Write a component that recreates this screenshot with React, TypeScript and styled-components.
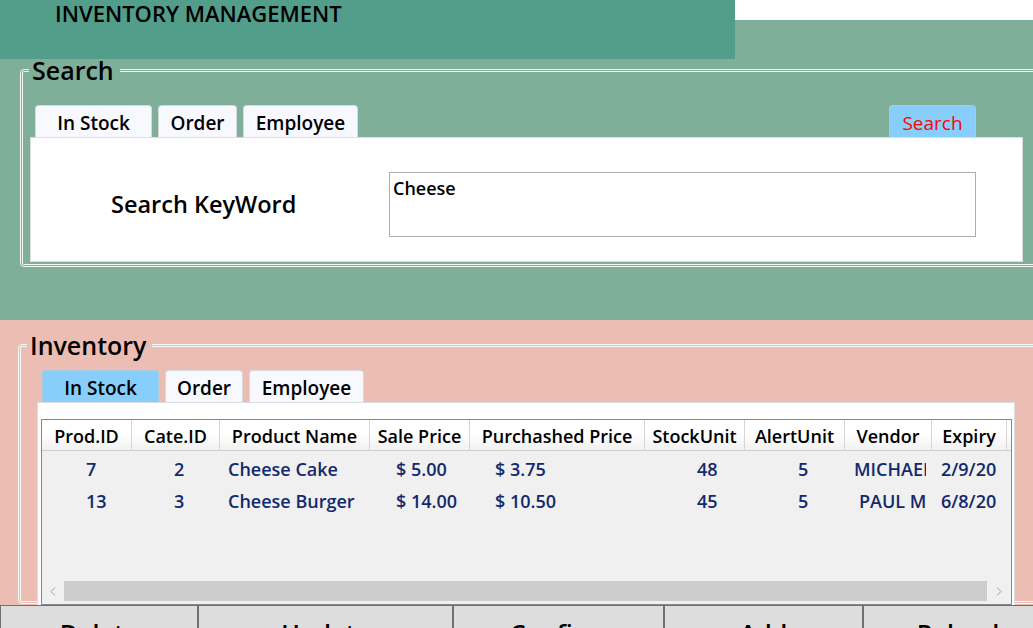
import React from "react";
import styled, { createGlobalStyle } from "styled-components";

const GlobalStyle = createGlobalStyle`
  html, body { margin: 0; padding: 0; background: #ffffff; overflow: hidden; }
  body { font-family: "Open Sans", "Noto Sans", "DejaVu Sans", sans-serif; color: #000; }
  * { box-sizing: border-box; }
`;

const Window = styled.div`
  width: 1033px;
  height: 628px;
  overflow: hidden;
  display: flex;
  flex-direction: column;
  background: #ffffff;
`;

const TopBar = styled.header`
  flex: none;
  display: grid;
  grid-template-columns: 735px 1fr;
  grid-template-rows: 20px 39px;
`;

const Title = styled.h1`
  grid-row: 1 / 3;
  grid-column: 1;
  margin: 0;
  padding: 1px 0 0 55px;
  background: #529e8a;
  font-size: 22px;
  font-weight: 600;
  line-height: 25px;
  color: #000;
`;

const TopBlank = styled.div`
  grid-row: 1;
  grid-column: 2;
  background: #ffffff;
`;

const TopFill = styled.div`
  grid-row: 2;
  grid-column: 2;
  background: #80af99;
`;

const Section = styled.section<{ $bg: string; $h: number; $pt: number; $pl: number }>`
  flex: none;
  height: ${(p) => p.$h}px;
  background: ${(p) => p.$bg};
  padding: ${(p) => p.$pt}px 0 0 ${(p) => p.$pl}px;
`;

const Group = styled.fieldset<{ $pt: number; $pb: number; $h?: number }>`
  margin: 0;
  min-width: 0;
  width: 1040px;
  ${(p) => (p.$h ? `height: ${p.$h}px;` : "")}
  border: 3px double #f3f7f5;
  border-radius: 4px;
  padding: ${(p) => p.$pt}px 0 ${(p) => p.$pb}px 6px;
`;

const Legend = styled.legend`
  padding: 0 6px 0 3px;
  font-size: 25px;
  font-weight: 600;
  line-height: 22px;
  color: #000;
`;

const Inset = styled.div<{ $x: number }>`
  margin-left: ${(p) => p.$x}px;
`;

const TabStrip = styled.div<{ $w: number }>`
  display: flex;
  gap: 6px;
  width: ${(p) => p.$w}px;
  height: 32px;
  padding-left: 5px;
`;

const Tab = styled.div<{ $w: number; $active?: boolean }>`
  flex: none;
  width: ${(p) => p.$w}px;
  height: 32px;
  padding-top: 2px;
  display: flex;
  align-items: center;
  justify-content: center;
  border: 1px solid ${(p) => (p.$active ? "#a6cde3" : "#d6d9de")};
  border-bottom: none;
  border-radius: 4px 4px 0 0;
  background: ${(p) => (p.$active ? "#87cefa" : "#f8f8ff")};
  font-size: 19px;
  font-weight: 600;
  color: #000;
  white-space: nowrap;
`;

const ActionTab = styled(Tab)`
  margin-left: auto;
  margin-right: 47px;
  color: #ff0000;
  font-weight: 500;
`;

const Panel = styled.div<{ $w: number; $h: number }>`
  width: ${(p) => p.$w}px;
  height: ${(p) => p.$h}px;
  background: #ffffff;
  border: 1px solid #dcdfe2;
`;

const SearchRow = styled.div`
  display: flex;
  align-items: flex-start;
  padding: 34px 0 0 80px;
`;

const FieldLabel = styled.div`
  flex: none;
  width: 278px;
  height: 65px;
  padding-bottom: 2px;
  display: flex;
  align-items: center;
  font-size: 23.5px;
  font-weight: 600;
  color: #000;
`;

const TextBox = styled.div`
  flex: none;
  width: 587px;
  height: 65px;
  border: 1px solid #abadb3;
  padding: 3px 3px;
  font-size: 18px;
  font-weight: 600;
  line-height: 24px;
  color: #000;
`;

const Grid = styled.div`
  margin: 16px 0 0 3px;
  width: 971px;
  height: 186px;
  border: 1px solid #828790;
  background: #f0f0f0;
  display: flex;
  flex-direction: column;
  overflow: hidden;
`;

const HeaderRow = styled.div`
  flex: none;
  display: flex;
  height: 31px;
  border-bottom: 1px solid #cfcfcf;
  background: linear-gradient(#ffffff 0%, #ffffff 45%, #f1f1f1 100%);
`;

const HeaderCell = styled.div<{ $w: number }>`
  flex: none;
  width: ${(p) => p.$w}px;
  height: 30px;
  padding-top: 2px;
  border-right: 1px solid #d6d6d6;
  display: flex;
  align-items: center;
  justify-content: center;
  font-size: 18px;
  font-weight: 600;
  color: #000;
  white-space: nowrap;
  overflow: hidden;
`;

const Body = styled.div`
  flex: 1;
  padding-top: 2px;
`;

const Row = styled.div`
  display: flex;
  height: 32px;
`;

const Cell = styled.div<{ $w: number; $pad: number }>`
  flex: none;
  width: ${(p) => p.$w}px;
  padding: 0 6px 0 ${(p) => p.$pad}px;
  font-size: 18px;
  font-weight: 600;
  line-height: 32px;
  color: #13296b;
`;

const CellText = styled.span`
  display: block;
  overflow: hidden;
  white-space: nowrap;
`;

const ScrollBar = styled.div`
  flex: none;
  display: flex;
  height: 20px;
  margin-bottom: 3px;
`;

const ScrollArrow = styled.div<{ $w: number }>`
  flex: none;
  width: ${(p) => p.$w}px;
  display: flex;
  align-items: center;
  justify-content: center;
`;

const ScrollThumb = styled.div`
  flex: 1;
  background: #cdcdcd;
`;

const ButtonBar = styled.footer`
  flex: none;
  display: flex;
  height: 56px;
`;

const ActionButton = styled.button<{ $w: number }>`
  flex: none;
  width: ${(p) => p.$w}px;
  height: 56px;
  margin: 0;
  padding: 0;
  background: #dddddd;
  border: 1px solid #707070;
  font-family: inherit;
  font-size: 25px;
  font-weight: 600;
  color: #000;
`;

const columns = [
  { label: "Prod.ID", w: 90, pad: 44 },
  { label: "Cate.ID", w: 88, pad: 42 },
  { label: "Product Name", w: 150, pad: 8 },
  { label: "Sale Price", w: 100, pad: 26 },
  { label: "Purchashed Price", w: 175, pad: 25 },
  { label: "StockUnit", w: 100, pad: 52 },
  { label: "AlertUnit", w: 100, pad: 53 },
  { label: "Vendor", w: 87, pad: 9 },
  { label: "Expiry", w: 75, pad: 9 },
];

type CellData = { text: string; pad?: number };

const rows: CellData[][] = [
  [
    { text: "7" },
    { text: "2" },
    { text: "Cheese Cake" },
    { text: "$ 5.00" },
    { text: "$ 3.75" },
    { text: "48" },
    { text: "5" },
    { text: "MICHAEL", pad: 9 },
    { text: "2/9/20" },
  ],
  [
    { text: "13" },
    { text: "3" },
    { text: "Cheese Burger" },
    { text: "$ 14.00" },
    { text: "$ 10.50" },
    { text: "45" },
    { text: "5" },
    { text: "PAUL M", pad: 14 },
    { text: "6/8/20" },
  ],
];

const Chevron = ({ dir }: { dir: "left" | "right" }) => (
  <svg width="6" height="9" viewBox="0 0 6 9">
    <polyline
      points={dir === "left" ? "5,0.5 1,4.5 5,8.5" : "1,0.5 5,4.5 1,8.5"}
      fill="none"
      stroke="#a3a3a3"
      strokeWidth="1"
    />
  </svg>
);

const buttons = [
  { label: "Delete", w: 198 },
  { label: "Update", w: 255 },
  { label: "Confirm", w: 211 },
  { label: "Add", w: 199 },
  { label: "Reload", w: 190 },
];

export default function App() {
  return (
    <>
      <GlobalStyle />
      <Window>
        <TopBar>
          <Title>INVENTORY MANAGEMENT</Title>
          <TopBlank />
          <TopFill />
        </TopBar>

        <Section $bg="#80af99" $h={261} $pt={0} $pl={20}>
          <Group $pt={24} $pb={2}>
            <Legend>Search</Legend>
            <Inset $x={1}>
              <TabStrip $w={993}>
                <Tab $w={117}>In Stock</Tab>
                <Tab $w={79}>Order</Tab>
                <Tab $w={115}>Employee</Tab>
                <ActionTab $w={87} $active>
                  Search
                </ActionTab>
              </TabStrip>
              <Panel $w={993} $h={125}>
                <SearchRow>
                  <FieldLabel>Search KeyWord</FieldLabel>
                  <TextBox>Cheese</TextBox>
                </SearchRow>
              </Panel>
            </Inset>
          </Group>
        </Section>

        <Section $bg="#ecbdb3" $h={285} $pt={14} $pl={18}>
          <Group $pt={14} $pb={0} $h={270}>
            <Legend>Inventory</Legend>
            <Inset $x={10}>
              <TabStrip $w={978}>
                <Tab $w={117} $active>
                  In Stock
                </Tab>
                <Tab $w={78}>Order</Tab>
                <Tab $w={115}>Employee</Tab>
              </TabStrip>
              <Panel $w={978} $h={204}>
                <Grid>
                  <HeaderRow>
                    {columns.map((c) => (
                      <HeaderCell key={c.label} $w={c.w}>
                        {c.label}
                      </HeaderCell>
                    ))}
                  </HeaderRow>
                  <Body>
                    {rows.map((r, i) => (
                      <Row key={i}>
                        {r.map((cell, j) => (
                          <Cell key={j} $w={columns[j].w} $pad={cell.pad ?? columns[j].pad}>
                            <CellText>{cell.text}</CellText>
                          </Cell>
                        ))}
                      </Row>
                    ))}
                  </Body>
                  <ScrollBar>
                    <ScrollArrow $w={22}>
                      <Chevron dir="left" />
                    </ScrollArrow>
                    <ScrollThumb />
                    <ScrollArrow $w={24}>
                      <Chevron dir="right" />
                    </ScrollArrow>
                  </ScrollBar>
                </Grid>
              </Panel>
            </Inset>
          </Group>
        </Section>

        <ButtonBar>
          {buttons.map((b) => (
            <ActionButton key={b.label} $w={b.w}>
              {b.label}
            </ActionButton>
          ))}
        </ButtonBar>
      </Window>
    </>
  );
}
